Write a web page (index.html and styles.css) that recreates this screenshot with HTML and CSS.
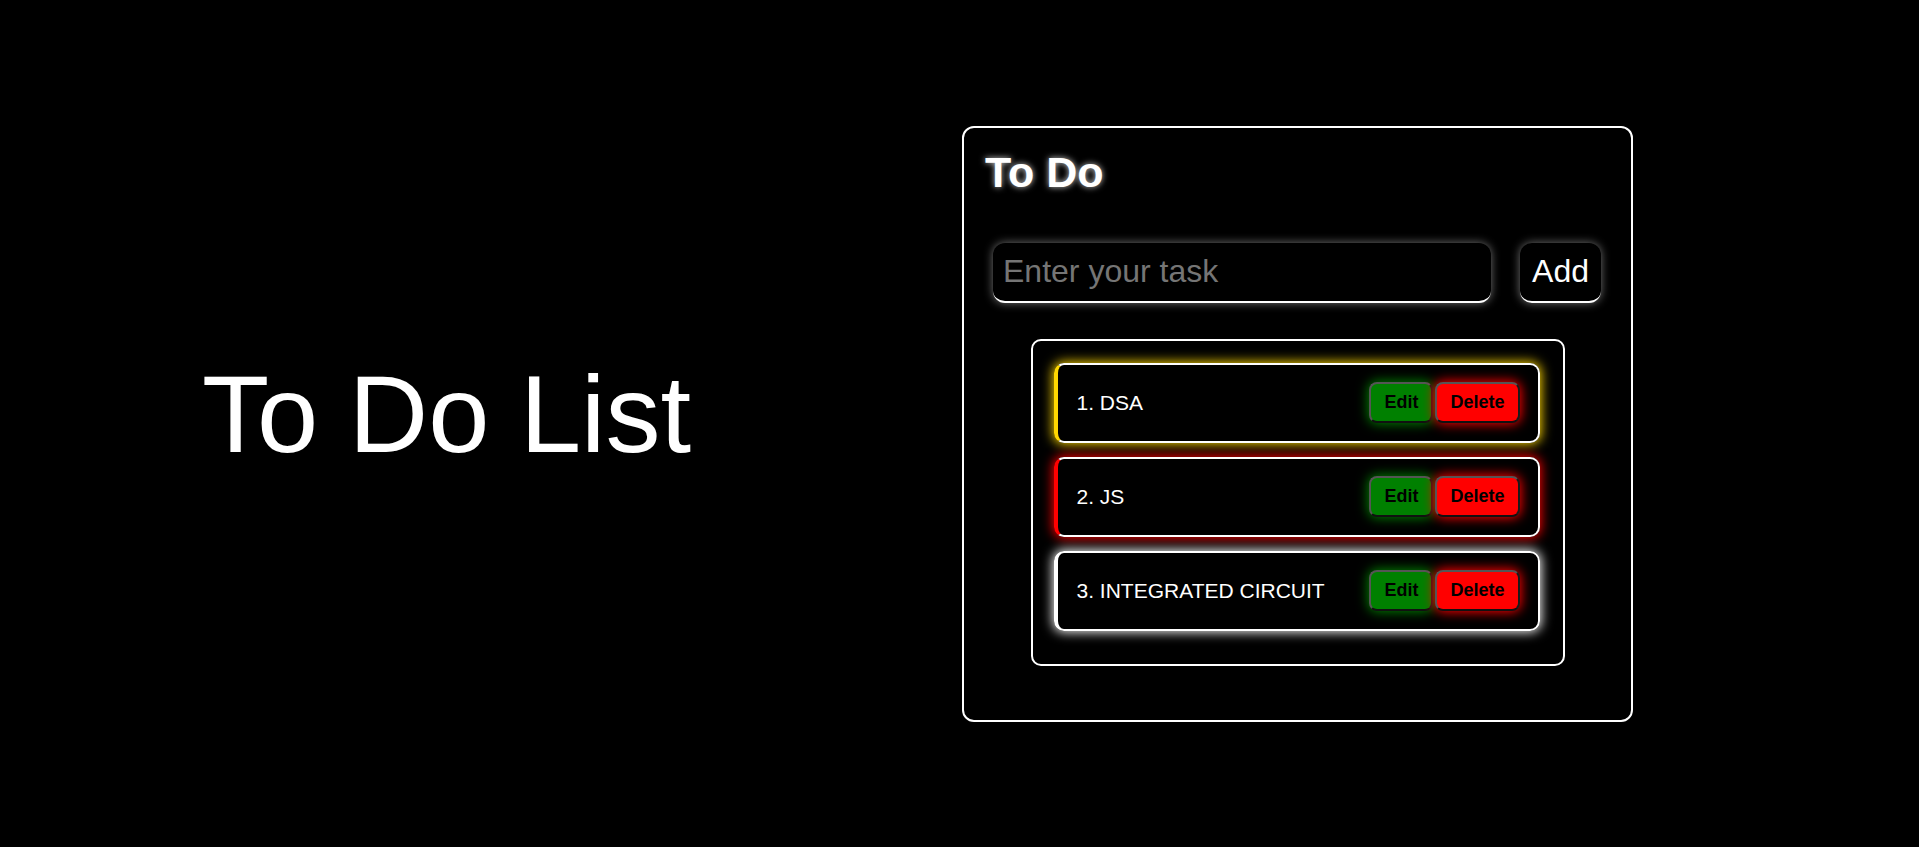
FILE: index.html
```html
<!DOCTYPE html>
<html lang="en">
<head>
<meta charset="UTF-8">
<title>To Do List</title>
<link rel="stylesheet" href="styles.css">
</head>
<body>
<main class="page">
  <h1 class="hero">To Do List</h1>
  <section class="card">
    <h2 class="card-title">To Do</h2>
    <div class="entry">
      <input class="entry-input" type="text" placeholder="Enter your task">
      <button class="entry-add">Add</button>
    </div>
    <ul class="list">
      <li class="task task-yellow">
        <span class="task-text">1. DSA</span>
        <div class="task-actions"><button class="btn btn-edit">Edit</button><button class="btn btn-delete">Delete</button></div>
      </li>
      <li class="task task-red">
        <span class="task-text">2. JS</span>
        <div class="task-actions"><button class="btn btn-edit">Edit</button><button class="btn btn-delete">Delete</button></div>
      </li>
      <li class="task task-white">
        <span class="task-text">3. INTEGRATED CIRCUIT</span>
        <div class="task-actions"><button class="btn btn-edit">Edit</button><button class="btn btn-delete">Delete</button></div>
      </li>
    </ul>
  </section>
</main>
</body>
</html>
```

FILE: styles.css
```css
* { box-sizing: border-box; }

html, body {
  margin: 0;
  padding: 0;
  background: #000;
  color: #fff;
  font-family: "Liberation Sans", Arial, sans-serif;
}

.page {
  height: 847px;
  display: flex;
  align-items: center;
  padding-left: 202px;
}

.hero {
  flex: 0 0 760px;
  margin: 0;
  padding-bottom: 19px;
  font-size: 110px;
  line-height: 110px;
  font-weight: 400;
  color: #fff;
}

.card {
  width: 671px;
  border: 2px solid #fff;
  border-radius: 12px;
  padding: 20px;
}

.card-title {
  margin: 0 0 46px 1px;
  font-size: 43px;
  line-height: 49px;
  font-weight: 700;
  color: #fff;
  text-shadow: 0 0 6px rgba(255, 255, 255, 0.8);
}

.entry {
  display: flex;
  align-items: center;
  gap: 29px;
  padding: 0 10px 0 9px;
  margin-bottom: 36px;
}

.entry-input {
  flex: 0 0 498px;
  height: 60px;
  background: #000;
  color: #fff;
  border: none;
  border-bottom: 2px solid #fff;
  border-radius: 12px;
  padding: 0 10px;
  font-family: "Liberation Sans", Arial, sans-serif;
  font-size: 32px;
  box-shadow: 0 0 10px rgba(255, 255, 255, 0.45);
  outline: none;
}

.entry-input::placeholder { color: #757575; }

.entry-add {
  width: 81px;
  height: 60px;
  background: #000;
  color: #fff;
  border: none;
  border-bottom: 2px solid #fff;
  border-radius: 12px;
  font-family: "Liberation Sans", Arial, sans-serif;
  font-size: 32px;
  padding: 0;
  box-shadow: 0 0 10px rgba(255, 255, 255, 0.45);
}

.list {
  list-style: none;
  width: 534px;
  margin: 0 auto 34px;
  border: 2px solid #fff;
  border-radius: 10px;
  padding: 22px 23px 19px 21px;
}

.task {
  height: 80px;
  margin-bottom: 14px;
  display: flex;
  align-items: center;
  justify-content: space-between;
  border: 2px solid #fff;
  border-left-width: 4px;
  border-radius: 10px;
  padding: 0 18px 0 19px;
}

.task-yellow { border-left-color: #ffd700; box-shadow: 0 0 12px 1px #ffd700; }
.task-red { border-left-color: #ff0000; box-shadow: 0 0 12px 1px #ff0000; }
.task-white { border-left-color: #fff; box-shadow: 0 0 12px 1px #fff; }

.task-text {
  font-size: 21px;
  color: #fff;
}

.task-actions {
  display: flex;
  gap: 2px;
}

.btn {
  height: 41px;
  padding: 0 13px;
  border: 2px solid #555;
  border-right-color: #1a1a1a;
  border-bottom-color: #111;
  border-radius: 8px;
  font-family: "Liberation Sans", Arial, sans-serif;
  font-size: 18px;
  font-weight: 700;
  color: #000;
}

.btn-edit { background: #008000; box-shadow: 0 0 12px 1px #008000; }
.btn-delete { background: #ff0000; box-shadow: 0 0 12px 1px #ff0000; }
```
